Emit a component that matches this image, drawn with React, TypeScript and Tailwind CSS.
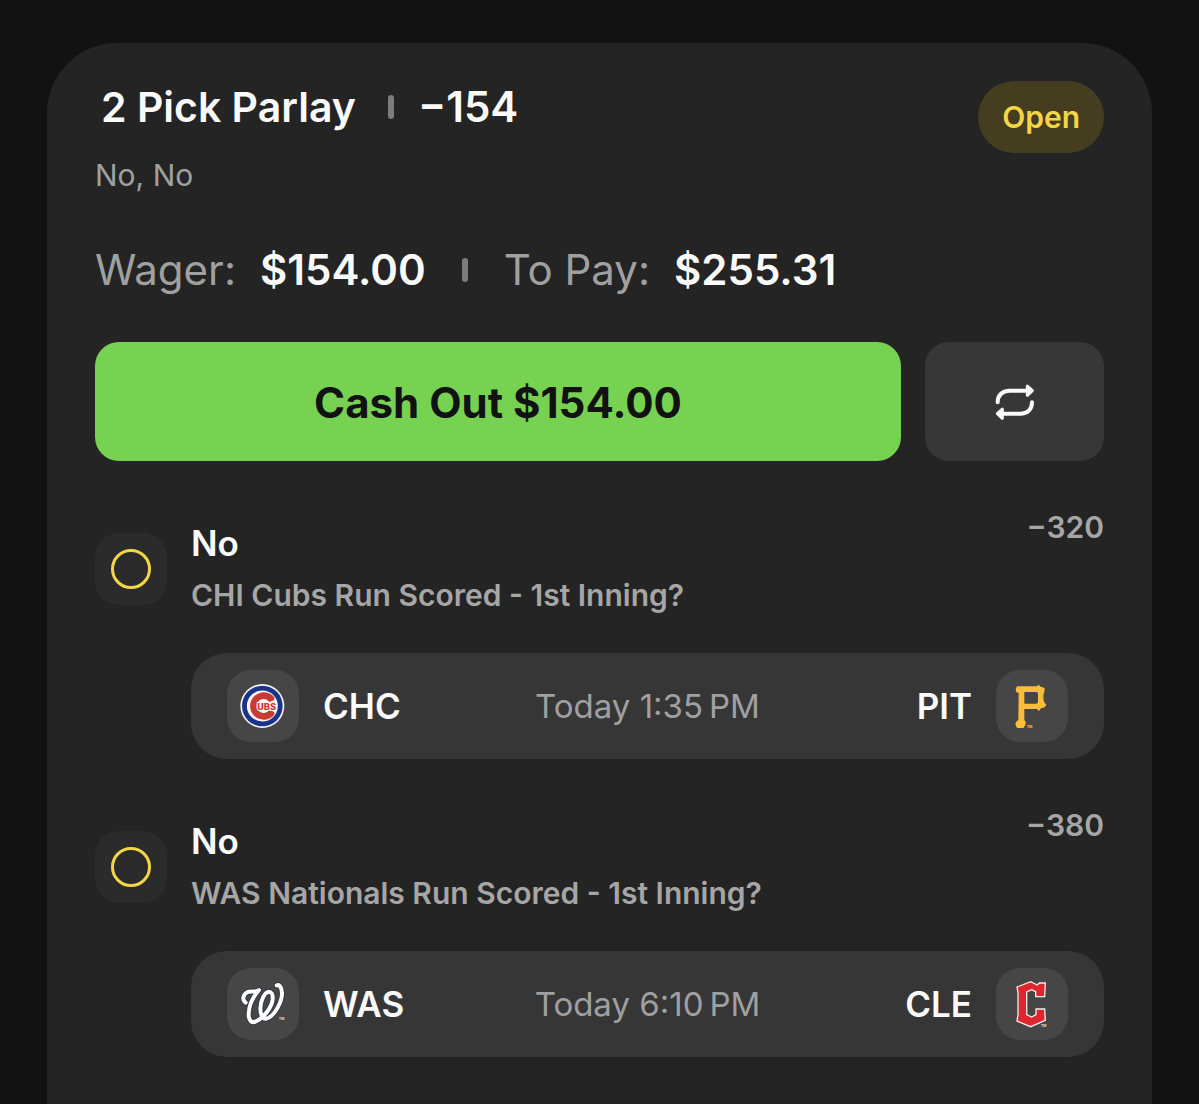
import type { ReactNode } from 'react';

function CubsLogo() {
  return (
    <svg viewBox="21 30 216 216" className="size-full" role="img" aria-label="Chicago Cubs">
      <circle cx="127" cy="138" r="66" fill="#f3f3f8" />
      <circle cx="127" cy="138" r="61" fill="#1b3489" />
      <circle cx="127" cy="138" r="46.5" fill="#f8f6f6" />
      <path
        d="M163 112 A41 41 0 1 0 163 164 L163 156 L148 150 A21 21 0 1 1 148 126 L163 120 Z"
        fill="#c93a32"
      />
      <text
        x="112"
        y="149"
        fill="#c93a32"
        stroke="#f8f6f6"
        strokeWidth="6"
        paintOrder="stroke"
        fontFamily="Roboto, sans-serif"
        fontWeight="900"
        fontSize="29"
      >
        UBS
      </text>
    </svg>
  );
}

function PiratesLogo() {
  return (
    <svg viewBox="21 30 216 216" className="size-full" role="img" aria-label="Pittsburgh Pirates">
      <path
        fill="#f9bd3c"
        fillRule="evenodd"
        d="M80 88 L84 79 L143 79 L149 74 L155 80 L167 84 L166 96 Q163 100 163 112 Q163 124 167 128 L172 134 L167 142 L156 145 L150 153 L143 147 L106 147 L106 180 Q113 187 109 194 L104 204 L84 204 L79 192 Q79 185 88 180 L89 98 L82 97 Z M106 96 L106 131 L143 131 L147 127 L147 100 L143 96 Z"
      />
      <text x="113" y="204" fill="#f9bd3c" fontFamily="Inter, sans-serif" fontWeight="700" fontSize="11">
        TM
      </text>
    </svg>
  );
}

function NationalsLogo() {
  const script =
    'M77 130 C66 122 68 107 81 99 C93 92 107 101 117 92 C103 108 87 136 86 162 C85 182 94 192 106 187 C130 177 156 144 158 119 C159 104 154 97 146 97 C133 99 122 124 121 147 C121 168 127 180 139 178 C162 173 187 128 186 100 C185 85 179 75 170 78';
  return (
    <svg viewBox="21 26 216 216" className="size-full" role="img" aria-label="Washington Nationals">
      <path d={script} fill="none" stroke="#2c3442" strokeWidth="17" strokeLinecap="round" strokeLinejoin="round" />
      <path d={script} fill="none" stroke="#ffffff" strokeWidth="12" strokeLinecap="round" strokeLinejoin="round" />
      <text x="177" y="182" fill="#e8e8e8" fontFamily="Inter, sans-serif" fontWeight="600" fontSize="10">
        TM
      </text>
    </svg>
  );
}

function GuardiansLogo() {
  return (
    <svg viewBox="21 26 216 216" className="size-full" role="img" aria-label="Cleveland Guardians">
      <path
        fill="#e1252f"
        stroke="#f4eded"
        strokeWidth="4"
        strokeLinejoin="miter"
        d="M84 83 L125 67 L145 77 L151 71 L169 71 L167 112 L140 112 L140 97 L128 91 L113 98 L113 166 L128 173 L141 166 L141 149 L167 149 L169 183 L125 202 L84 185 L87 166 L87 100 Z"
      />
      <text x="156" y="202" fill="#eeeeee" fontFamily="Inter, sans-serif" fontWeight="600" fontSize="10">
        TM
      </text>
    </svg>
  );
}

function RepeatIcon() {
  return (
    <svg
      viewBox="0 0 120 120"
      className="size-10"
      fill="none"
      stroke="#fafafa"
      strokeWidth="12"
      strokeLinecap="round"
      strokeLinejoin="round"
      aria-hidden="true"
    >
      <path d="M8 61 C8 41 21 26 43 26 H100" />
      <path d="M111 61 C111 81 98 95 76 95 H16" />
      <path d="M97 12 L112 26 L97 40 Z" fill="#fafafa" strokeWidth="9" />
      <path d="M22 81 L7 95 L22 109 Z" fill="#fafafa" strokeWidth="9" />
    </svg>
  );
}

function Separator() {
  return <span aria-hidden="true" className="h-6 w-1.5 shrink-0 rounded-sm bg-[#7c7c7c]" />;
}

function LogoTile({ children }: { children: ReactNode }) {
  return <span className="size-18 shrink-0 overflow-hidden rounded-3xl bg-[#464646]">{children}</span>;
}

type Leg = {
  pick: string;
  market: string;
  odds: string;
  time: string;
  away: string;
  home: string;
  awayLogo: ReactNode;
  homeLogo: ReactNode;
};

const legs: Leg[] = [
  {
    pick: 'No',
    market: 'CHI Cubs Run Scored - 1st Inning?',
    odds: '−320',
    time: 'Today 1:35\u202fPM',
    away: 'CHC',
    home: 'PIT',
    awayLogo: <CubsLogo />,
    homeLogo: <PiratesLogo />,
  },
  {
    pick: 'No',
    market: 'WAS Nationals Run Scored - 1st Inning?',
    odds: '−380',
    time: 'Today 6:10\u202fPM',
    away: 'WAS',
    home: 'CLE',
    awayLogo: <NationalsLogo />,
    homeLogo: <GuardiansLogo />,
  },
];

function LegRow({ leg }: { leg: Leg }) {
  return (
    <li className="flex gap-6">
      <span className="mt-6 flex size-18 shrink-0 items-center justify-center rounded-3xl bg-[#2b2b2b]">
        <span className="size-10 rounded-full border-3 border-[#f3d548]" />
      </span>
      <div className="min-w-0 flex-1">
        <div className="flex items-start justify-between">
          <div className="pt-3">
            <h2 className="text-[35px] leading-11 font-semibold text-[#fafafa]">{leg.pick}</h2>
            <p className="mt-3 text-[30px] leading-9 font-semibold text-[#a6a6a6]">{leg.market}</p>
          </div>
          <span className="text-[30px] leading-9 font-semibold text-[#a6a6a6]">{leg.odds}</span>
        </div>
        <div className="mt-10 grid h-[106px] grid-cols-[1fr_auto_1fr] items-center rounded-[36px] bg-[#363636] px-9">
          <div className="flex items-center gap-6">
            <LogoTile>{leg.awayLogo}</LogoTile>
            <span className="text-[35px] leading-11 font-semibold text-[#fafafa]">{leg.away}</span>
          </div>
          <time className="text-[33px] leading-11 font-normal text-[#a0a0a0]">{leg.time}</time>
          <div className="flex items-center justify-end gap-6">
            <span className="text-[35px] leading-11 font-semibold text-[#fafafa]">{leg.home}</span>
            <LogoTile>{leg.homeLogo}</LogoTile>
          </div>
        </div>
      </div>
    </li>
  );
}

export default function App() {
  return (
    <div className="flex min-h-screen flex-col bg-[#121212] px-[47px] pt-[43px] font-['Inter',sans-serif]">
      <main className="flex-1 rounded-t-[70px] bg-[#242424] px-12 pt-[38px] pb-[46px]">
        <header className="flex items-start justify-between">
          <div>
            <h1 className="flex items-center gap-6 pl-1.5 leading-[52px] font-semibold text-[#fafafa]">
              <span className="mr-2 text-[41px]">2 Pick Parlay</span>
              <Separator />
              <span className="text-[42px]">−154</span>
            </h1>
            <p className="mt-6 text-[30px] leading-9 font-normal text-[#a0a0a0]">No, No</p>
          </div>
          <span className="rounded-full bg-[#443d20] px-6 py-[18px] text-[30px] leading-9 font-semibold text-[#f3d548]">
            Open
          </span>
        </header>

        <div className="mt-[51px] flex items-center text-[42px] leading-[52px]">
          <span className="font-normal text-[#a0a0a0]">Wager:</span>
          <span className="ml-6 font-semibold text-[#fafafa]">$154.00</span>
          <span className="mx-9 flex">
            <Separator />
          </span>
          <span className="font-normal text-[#a0a0a0]">To Pay:</span>
          <span className="ml-6 font-semibold text-[#fafafa]">$255.31</span>
        </div>

        <div className="mt-[46px] flex gap-6">
          <button
            type="button"
            className="h-[119px] flex-1 rounded-3xl bg-[#78d252] pt-0.5 text-[42px] leading-[52px] font-bold text-[#121212]"
          >
            Cash Out $154.00
          </button>
          <button
            type="button"
            aria-label="Repeat bet"
            className="flex h-[119px] w-[179px] items-center justify-center rounded-3xl bg-[#373737]"
          >
            <RepeatIcon />
          </button>
        </div>

        <ul className="mt-12 flex flex-col gap-12">
          {legs.map((leg) => (
            <LegRow key={leg.away} leg={leg} />
          ))}
        </ul>
      </main>
    </div>
  );
}
